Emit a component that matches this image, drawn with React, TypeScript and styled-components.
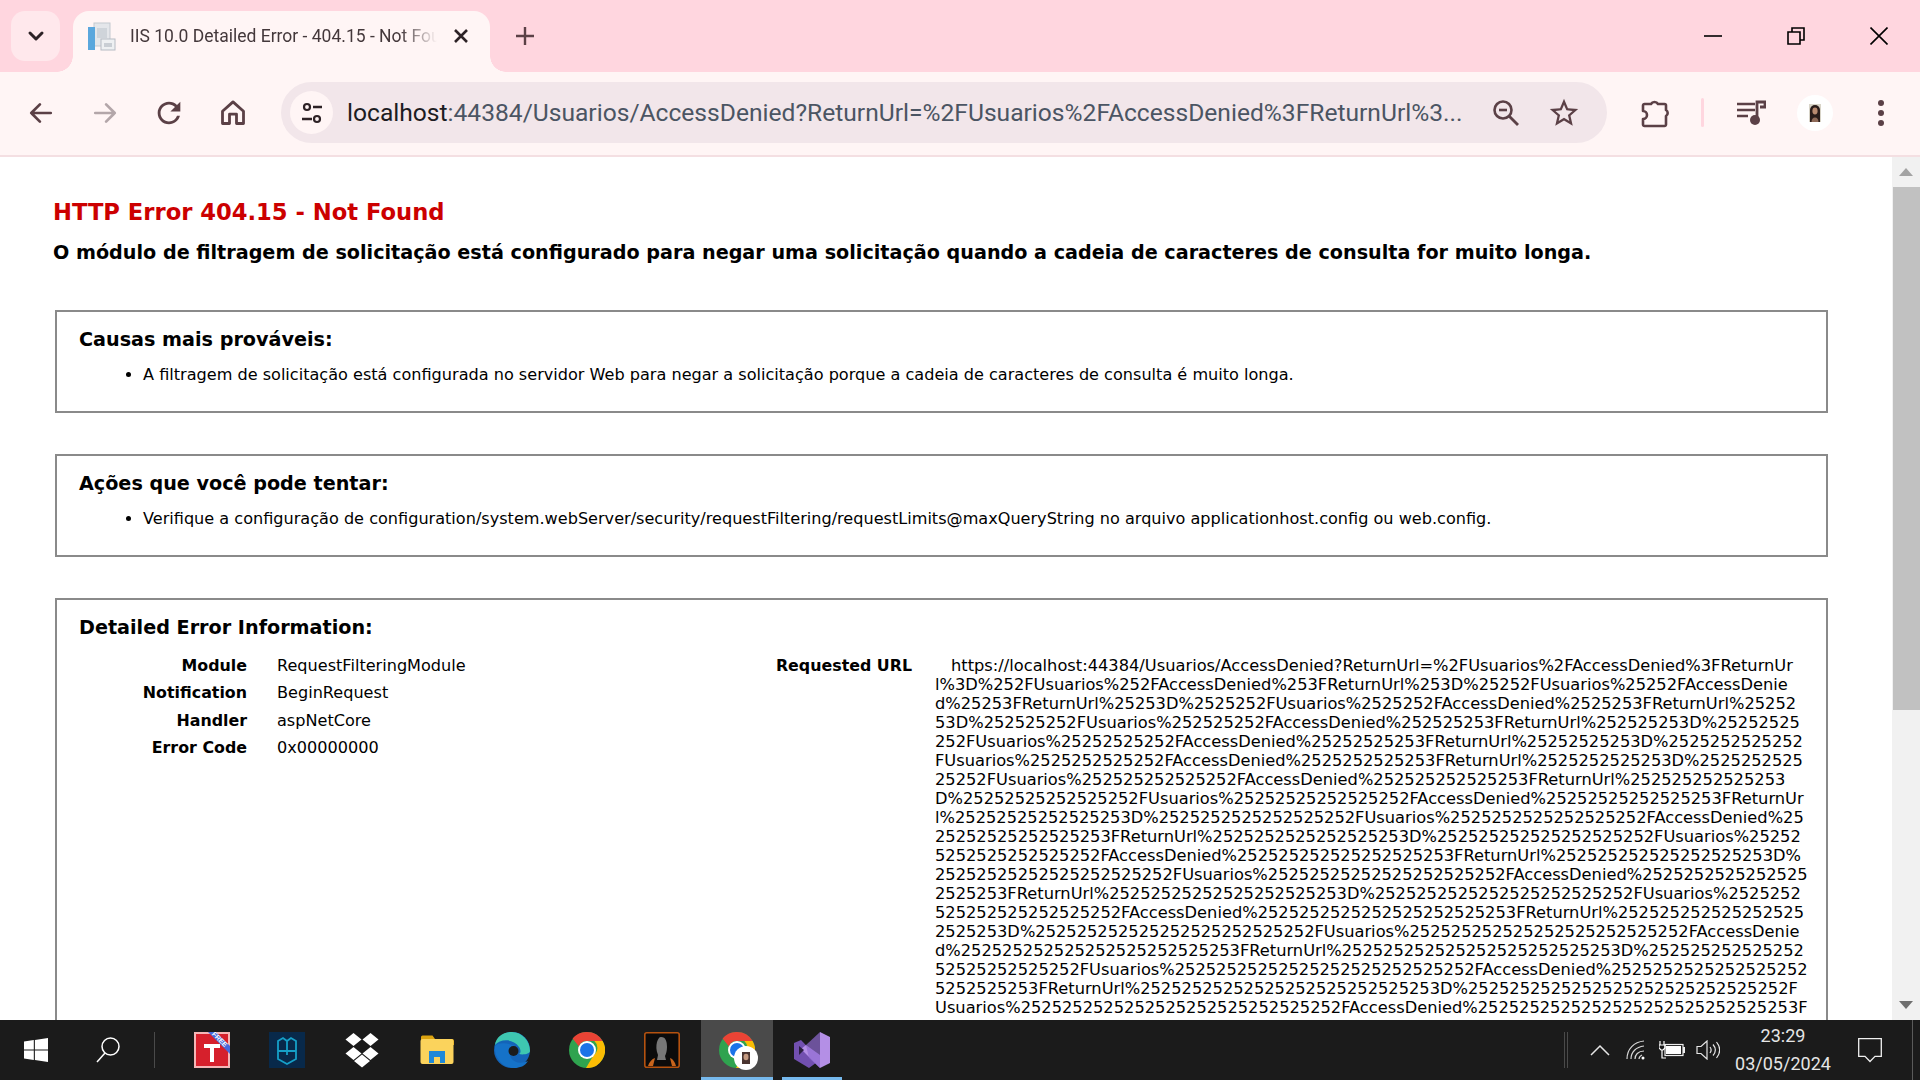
import React from "react";
import styled, { createGlobalStyle } from "styled-components";

const GlobalStyle = createGlobalStyle`
  html, body { margin: 0; padding: 0; height: 100%; overflow: hidden; background: #fff; }
  #root { height: 100%; }
`;

const uiFont = `Roboto, "Open Sans", "Liberation Sans", sans-serif`;
const pageFont = `"DejaVu Sans", Verdana, sans-serif`;
const ink = "#5b4046";

const Screen = styled.div`
  display: flex; flex-direction: column; width: 1920px; height: 1080px; overflow: hidden;
`;
const TitleBar = styled.div`
  display: flex; align-items: flex-start; height: 72px; flex: none; box-sizing: border-box;
  padding: 11px 0 0 11px; background: #ffd6df;
`;
const TabSearchButton = styled.div`
  display: flex; align-items: center; justify-content: center; width: 49px; height: 50px;
  border-radius: 14px; background: #ffe8ec; flex: none;
`;
const Tab = styled.div`
  position: relative; display: flex; align-items: center; width: 417px; height: 61px; margin-left: 13px;
  box-sizing: border-box; padding: 0 21px 11px 14px; background: #fff5f5; border-radius: 16px 16px 0 0; flex: none;
  &::before, &::after { content: ""; position: absolute; bottom: 0; width: 16px; height: 16px;
    background: radial-gradient(circle at var(--cx) 0, #ffd6df 15.5px, #fff5f5 16px); }
  &::before { left: -16px; --cx: 0; }
  &::after { right: -16px; --cx: 16px; }
`;
const Favicon = styled.svg`width: 29px; height: 29px; flex: none;`;
const TabTitle = styled.span`
  flex: 1; margin-left: 14px; overflow: hidden; white-space: nowrap; font: 400 17.5px ${uiFont}; color: #44383b;
  -webkit-mask-image: linear-gradient(to right, #000 88%, transparent 100%);
`;
const TabClose = styled.svg`width: 16px; height: 16px; flex: none; margin-left: 16px;`;
const NewTab = styled.svg`width: 22px; height: 22px; margin: 14px 0 0 24px; flex: none;`;
const WindowControls = styled.div`display: flex; margin-left: auto; height: 50px;`;
const WindowButton = styled.div`display: flex; align-items: center; justify-content: center; width: 83px; height: 50px;`;

const Toolbar = styled.div`
  display: flex; align-items: center; height: 85px; flex: none; box-sizing: border-box; padding: 0 5px 2px 9px;
  background: #fff5f5; border-bottom: 2px solid #f4dfe2;
`;
const IconSlot = styled.div`display: flex; align-items: center; justify-content: center; width: 64px; height: 61px; flex: none;`;
const MenuSlot = styled(IconSlot)`margin-left: 2px;`;
const AddressBar = styled.div`
  display: flex; align-items: center; width: 1326px; height: 61px; margin: 0 16px; box-sizing: border-box;
  padding: 0 14px 0 9px; border-radius: 31px; background: #f2e6ea; flex: none;
`;
const SiteInfo = styled.div`
  display: flex; align-items: center; justify-content: center; width: 43px; height: 43px; border-radius: 50%; background: #fff5f5; flex: none;
`;
const UrlText = styled.div`
  flex: 1; margin-left: 14px; white-space: nowrap; overflow: hidden; font: 400 24.6px ${uiFont}; color: #4b5563;
  b { font-weight: 400; color: #1c1c22; }
`;
const AddressIcon = styled.div`display: flex; align-items: center; justify-content: center; width: 58px; flex: none;`;
const ToolbarSeparator = styled.div`width: 3px; height: 29px; border-radius: 2px; background: #ffd6df; margin: 0 15px 0 14px; flex: none;`;
const ProfileCircle = styled.div`
  display: flex; align-items: center; justify-content: center; width: 36px; height: 36px; border-radius: 50%; background: #fff;
`;

const PageArea = styled.div`display: flex; flex: 1; min-height: 0; background: #fff;`;
const Content = styled.div`flex: 1; min-width: 0; overflow: hidden; box-sizing: border-box; padding: 41px 0 0 53px;
  font-family: ${pageFont}; color: #000;`;
const ErrorTitle = styled.h1`margin: 0; font: 700 22.65px/28px ${pageFont}; color: #cc0000;`;
const ErrorSubtitle = styled.h2`margin: 15px 0 0; font: 700 19.18px/24px ${pageFont}; color: #000; white-space: nowrap;`;
const Box = styled.section`
  width: 1773px; height: 103px; margin: 41px 0 0 2px; box-sizing: border-box; padding: 16px 22px 0;
  border: 2px solid #8a8a8a; flex: none;
  &:first-of-type { margin-top: 45px; }
`;
const TallBox = styled(Box)`height: 700px;`;
const BoxTitle = styled.h3`margin: 0; font: 700 19.18px/24px ${pageFont}; color: #000;`;
const Causes = styled.ul`margin: 13px 0 0; padding: 0 0 0 64px; font-size: 16.1px; line-height: 19px;`;
const InfoRow = styled.div`display: flex; margin-top: 16px; font-size: 16.1px; line-height: 19px;`;
const Summary = styled.div`display: grid; grid-template-columns: 168px auto; column-gap: 30px; row-gap: 8.4px; width: 620px; align-content: start; flex: none;`;
const Label = styled.div`font-weight: 700; font-size: 15.85px; text-align: right;`;
const Value = styled.div``;
const UrlLabel = styled(Label)`width: 213px; flex: none;`;
const UrlValue = styled.div`margin-left: 23px; white-space: nowrap; font-size: 16.25px;`;
const UrlLine = styled.div<{ $indent?: boolean }>`padding-left: ${(p) => (p.$indent ? "16px" : "0")};`;

const Scrollbar = styled.div`display: flex; flex-direction: column; width: 28px; flex: none; background: #f1f1f1;`;
const ScrollArrow = styled.div`display: flex; align-items: center; justify-content: center; height: 30px; flex: none;`;
const ScrollThumb = styled.div`height: 523px; margin-left: 1px; background: #c1c1c1; flex: none;`;
const ScrollTrack = styled.div`flex: 1;`;

const Taskbar = styled.div`display: flex; align-items: stretch; height: 60px; flex: none; background: #1b1b1b;`;
const TaskLead = styled.div`display: flex; align-items: center; justify-content: center; width: 72px; flex: none;`;
const TaskDivider = styled.div`width: 1px; height: 36px; align-self: center; background: #4a4a4a; margin-left: 10px; margin-right: 19px; flex: none;`;
const TaskSlot = styled.div<{ $active?: boolean; $running?: boolean }>`
  position: relative; display: flex; align-items: center; justify-content: center; width: 75px; flex: none;
  &::before { content: ""; position: absolute; top: 0; bottom: 0; left: 2px; right: 1px;
    background: ${(p) => (p.$active ? "#4a4a4a" : "transparent")}; }
  &::after { content: ""; position: absolute; bottom: 0; height: 3px; left: ${(p) => (p.$active ? "2px" : "8px")}; right: ${(p) => (p.$active ? "1px" : "7px")};
    background: ${(p) => (p.$active || p.$running ? "#76b9ed" : "transparent")}; }
  svg { position: relative; }
`;
const Tray = styled.div`display: flex; align-items: stretch; margin-left: auto;`;
const TrayDivider = styled.div`width: 4px; height: 36px; align-self: center; border-left: 1px solid #4a4a4a; border-right: 1px solid #4a4a4a; box-sizing: border-box; margin-right: 14px;`;
const TraySlot = styled.div`display: flex; align-items: center; justify-content: center; width: 36px; flex: none;`;
const Clock = styled.div`
  display: flex; flex-direction: column; align-items: center; justify-content: center; width: 114px; gap: 4px;
  font: 400 18px/24px ${uiFont}; color: #e6e6e6; flex: none;
`;
const NotifySlot = styled.div`display: flex; align-items: center; justify-content: center; width: 60px; flex: none;`;
const ShowDesktop = styled.div`width: 7px; margin-left: 12px; border-left: 1px solid #5a5a5a; flex: none;`;

const p = (n: number) => "%" + "25".repeat(n);
const r = (n: number) => "25".repeat(n);
const urlLines = [
  `https://localhost:44384/Usuarios/AccessDenied?ReturnUrl=${p(0)}2FUsuarios${p(0)}2FAccessDenied${p(0)}3FReturnUr`,
  `l${p(0)}3D${p(1)}2FUsuarios${p(1)}2FAccessDenied${p(1)}3FReturnUrl${p(1)}3D${p(2)}2FUsuarios${p(2)}2FAccessDenie`,
  `d${p(2)}3FReturnUrl${p(2)}3D${p(3)}2FUsuarios${p(3)}2FAccessDenied${p(3)}3FReturnUrl%25252`,
  `53D${p(4)}2FUsuarios${p(4)}2FAccessDenied${p(4)}3FReturnUrl${p(4)}3D${p(4)}`,
  `252FUsuarios${p(5)}2FAccessDenied${p(5)}3FReturnUrl${p(5)}3D${p(6)}2`,
  `FUsuarios${p(6)}2FAccessDenied${p(6)}3FReturnUrl${p(6)}3D${p(5)}`,
  `25252FUsuarios${p(7)}2FAccessDenied${p(7)}3FReturnUrl${p(7)}3`,
  `D${p(8)}2FUsuarios${p(8)}2FAccessDenied${p(8)}3FReturnUr`,
  `l${p(8)}3D${p(9)}2FUsuarios${p(9)}2FAccessDenied%25`,
  `${r(8)}3FReturnUrl${p(9)}3D${p(10)}2FUsuarios%25252`,
  `5${r(7)}2FAccessDenied${p(10)}3FReturnUrl${p(10)}3D%`,
  `${r(11)}2FUsuarios${p(11)}2FAccessDenied${p(8)}`,
  `2525253FReturnUrl${p(11)}3D${p(12)}2FUsuarios%2525252`,
  `5${r(8)}2FAccessDenied${p(12)}3FReturnUrl${p(9)}`,
  `2525253D${p(13)}2FUsuarios${p(13)}2FAccessDenie`,
  `d${p(13)}3FReturnUrl${p(13)}3D%252525252525252`,
  `5${r(6)}2FUsuarios${p(14)}2FAccessDenied%2525252525252525252`,
  `5252525253FReturnUrl${p(14)}3D${p(15)}2F`,
  `Usuarios${p(15)}2FAccessDenied${p(15)}3F`,
  `ReturnUrl${p(15)}3D${p(16)}`,
];

const ChromeLogo = ({ size = 36 }: { size?: number }) => (
  <svg width={size} height={size} viewBox="0 0 36 36">
    <circle cx="18" cy="18" r="18" fill="#2fa34f" />
    <path d="M18 0a18 18 0 0 1 15.6 9H18a9 9 0 0 0-8.2 5.3L3.6 6.6A18 18 0 0 1 18 0z" fill="#ea4335" />
    <path d="M33.6 9A18 18 0 0 1 17 36l7.7-13a9 9 0 0 0 .6-14z" fill="#fbbc04" />
    <circle cx="18" cy="18" r="9" fill="#fff" />
    <circle cx="18" cy="18" r="7" fill="#1a73e8" />
  </svg>
);

const Line = ({ d, w = 2.4, c = ink }: { d: string; w?: number; c?: string }) => (
  <path d={d} fill="none" stroke={c} strokeWidth={w} strokeLinecap="round" strokeLinejoin="round" />
);

export default function App() {
  return (
    <Screen>
      <GlobalStyle />
      <TitleBar>
        <TabSearchButton>
          <svg width="18" height="12" viewBox="0 0 18 12"><path d="M3 3l6 6 6-6" fill="none" stroke="#2d2226" strokeWidth="3" strokeLinecap="round" strokeLinejoin="round" /></svg>
        </TabSearchButton>
        <Tab>
          <Favicon viewBox="0 0 29 29">
            <rect x="7" y="1" width="16" height="23" fill="#e4e6ea" stroke="#c4c9d0" />
            <rect x="1" y="5" width="7" height="23" fill="#5aa7dd" />
            <rect x="10" y="6" width="10" height="10" fill="#cfd4da" />
            <rect x="14" y="17" width="14" height="11" fill="#eef0f2" stroke="#b6bcc4" />
            <rect x="17" y="21" width="8" height="4" fill="#c9ced4" />
          </Favicon>
          <TabTitle>IIS 10.0 Detailed Error - 404.15 - Not Found</TabTitle>
          <TabClose viewBox="0 0 16 16"><path d="M2 2l12 12M14 2L2 14" stroke="#2d2226" strokeWidth="2.6" fill="none" /></TabClose>
        </Tab>
        <NewTab viewBox="0 0 22 22"><path d="M11 2v18M2 11h18" stroke={ink} strokeWidth="2.4" fill="none" /></NewTab>
        <WindowControls>
          <WindowButton>
            <svg width="18" height="18" viewBox="0 0 18 18"><path d="M0 9h18" stroke="#000" strokeWidth="1.6" /></svg>
          </WindowButton>
          <WindowButton>
            <svg width="18" height="18" viewBox="0 0 18 18"><path d="M1 5h12v12H1zM5 5V1h12v12h-4" fill="none" stroke="#000" strokeWidth="1.6" /></svg>
          </WindowButton>
          <WindowButton>
            <svg width="18" height="18" viewBox="0 0 18 18"><path d="M0.5 0.5l17 17M17.5 0.5l-17 17" stroke="#000" strokeWidth="1.6" fill="none" /></svg>
          </WindowButton>
        </WindowControls>
      </TitleBar>

      <Toolbar>
        <IconSlot>
          <svg width="26" height="26" viewBox="0 0 24 24"><Line d="M21 12H3M11 4l-8 8 8 8" w={2.5} /></svg>
        </IconSlot>
        <IconSlot>
          <svg width="26" height="26" viewBox="0 0 24 24"><Line d="M3 12h18M13 4l8 8-8 8" w={2.5} c="#b3a6a9" /></svg>
        </IconSlot>
        <IconSlot>
          <svg width="34" height="34" viewBox="0 0 24 24"><path fill={ink} d="M17.65 6.35A7.958 7.958 0 0 0 12 4c-4.42 0-7.99 3.58-7.99 8s3.57 8 7.99 8c3.73 0 6.84-2.55 7.73-6h-2.08A5.99 5.99 0 0 1 12 18c-3.31 0-6-2.69-6-6s2.69-6 6-6c1.66 0 3.14.69 4.22 1.78L13 11h7V4l-2.35 2.35z" /></svg>
        </IconSlot>
        <IconSlot>
          <svg width="28" height="28" viewBox="0 0 24 24"><path d="M3 10.5L12 2.5l9 8V21h-6v-8H9v8H3z" fill="none" stroke={ink} strokeWidth="2.4" strokeLinejoin="round" /></svg>
        </IconSlot>
        <AddressBar>
          <SiteInfo>
            <svg width="24" height="24" viewBox="0 0 24 24">
              <circle cx="7" cy="6" r="3" fill="none" stroke="#2d2226" strokeWidth="2.2" />
              <circle cx="17" cy="18" r="3" fill="none" stroke="#2d2226" strokeWidth="2.2" />
              <path d="M13 6h9M2 18h10" stroke="#2d2226" strokeWidth="2.4" fill="none" />
            </svg>
          </SiteInfo>
          <UrlText><b>localhost</b>:44384/Usuarios/AccessDenied?ReturnUrl=%2FUsuarios%2FAccessDenied%3FReturnUrl%3...</UrlText>
          <AddressIcon>
            <svg width="28" height="28" viewBox="0 0 28 28">
              <circle cx="11" cy="11" r="8.5" fill="none" stroke={ink} strokeWidth="2.6" />
              <path d="M17 17l9 9" stroke={ink} strokeWidth="2.8" fill="none" />
              <path d="M7 11h8" stroke={ink} strokeWidth="2.6" fill="none" />
            </svg>
          </AddressIcon>
          <AddressIcon>
            <svg width="34" height="34" viewBox="0 0 24 24"><path fill={ink} d="M22 9.24l-7.19-.62L12 2 9.19 8.63 2 9.24l5.46 4.73L5.82 21 12 17.27 18.18 21l-1.63-7.03L22 9.24zM12 15.4l-3.76 2.27 1-4.28-3.32-2.88 4.38-.38L12 6.1l1.71 4.04 4.38.38-3.32 2.88 1 4.28L12 15.4z" /></svg>
          </AddressIcon>
        </AddressBar>
        <IconSlot>
          <svg width="30" height="30" viewBox="0 0 30 30">
            <path d="M3 7.5a1.5 1.5 0 0 1 1.5-1.5H11a4 4 0 0 1 7 0h6.5A1.5 1.5 0 0 1 26 7.500V12a3.500 3.500 0 0 1 0 6v8.500a1.500 1.500 0 0 1-1.500 1.500H4.500A1.500 1.500 0 0 1 3 26.500V21a4 4 0 0 0 0-8z" fill="none" stroke={ink} strokeWidth="2.6" strokeLinejoin="round" />
          </svg>
        </IconSlot>
        <ToolbarSeparator />
        <IconSlot>
          <svg width="30" height="26" viewBox="0 0 30 26">
            <path d="M1 4h18M1 10h18M1 16h11" stroke={ink} strokeWidth="2.6" fill="none" />
            <path d="M21 20V2h8v5h-5" fill="none" stroke={ink} strokeWidth="2.8" />
            <circle cx="19" cy="20" r="5" fill={ink} />
          </svg>
        </IconSlot>
        <IconSlot>
          <ProfileCircle>
            <svg width="12" height="18" viewBox="0 0 12 18">
              <rect width="12" height="18" fill="#d8d4c8" />
              <path d="M1 18V6a5 5 0 0 1 10 0v12z" fill="#2a1c1a" />
              <ellipse cx="6" cy="7" rx="2.600" ry="3.400" fill="#b98a70" />
              <path d="M2.500 18c0-3 1.500-4.500 3.500-4.500S9.500 15 9.500 18z" fill="#8f6a58" />
            </svg>
          </ProfileCircle>
        </IconSlot>
        <MenuSlot>
          <svg width="8" height="28" viewBox="0 0 8 28">
            <circle cx="4" cy="4" r="3" fill={ink} /><circle cx="4" cy="14" r="3" fill={ink} /><circle cx="4" cy="24" r="3" fill={ink} />
          </svg>
        </MenuSlot>
      </Toolbar>

      <PageArea>
        <Content>
          <ErrorTitle>HTTP Error 404.15 - Not Found</ErrorTitle>
          <ErrorSubtitle>O módulo de filtragem de solicitação está configurado para negar uma solicitação quando a cadeia de caracteres de consulta for muito longa.</ErrorSubtitle>
          <Box>
            <BoxTitle>Causas mais prováveis:</BoxTitle>
            <Causes>
              <li>A filtragem de solicitação está configurada no servidor Web para negar a solicitação porque a cadeia de caracteres de consulta é muito longa.</li>
            </Causes>
          </Box>
          <Box>
            <BoxTitle>Ações que você pode tentar:</BoxTitle>
            <Causes>
              <li>Verifique a configuração de configuration/system.webServer/security/requestFiltering/requestLimits@maxQueryString no arquivo applicationhost.config ou web.config.</li>
            </Causes>
          </Box>
          <TallBox>
            <BoxTitle>Detailed Error Information:</BoxTitle>
            <InfoRow>
              <Summary>
                <Label>Module</Label><Value>RequestFilteringModule</Value>
                <Label>Notification</Label><Value>BeginRequest</Value>
                <Label>Handler</Label><Value>aspNetCore</Value>
                <Label>Error Code</Label><Value>0x00000000</Value>
              </Summary>
              <UrlLabel>Requested URL</UrlLabel>
              <UrlValue>
                {urlLines.map((line, i) => (
                  <UrlLine key={i} $indent={i === 0}>{line}</UrlLine>
                ))}
              </UrlValue>
            </InfoRow>
          </TallBox>
        </Content>
        <Scrollbar>
          <ScrollArrow>
            <svg width="14" height="8" viewBox="0 0 14 8"><path d="M7 0l7 8H0z" fill="#a3a3a3" /></svg>
          </ScrollArrow>
          <ScrollThumb />
          <ScrollTrack />
          <ScrollArrow>
            <svg width="14" height="8" viewBox="0 0 14 8"><path d="M0 0h14L7 8z" fill="#6f6f6f" /></svg>
          </ScrollArrow>
        </Scrollbar>
      </PageArea>

      <Taskbar>
        <TaskLead>
          <svg width="24" height="24" viewBox="0 0 24 24"><path fill="#fff" d="M0 3.400l9.800-1.300v9.400H0zM10.900 1.900L24 0v11.500H10.900zM0 12.500h9.800v9.400L0 20.600zM10.900 12.500H24V24l-13.100-1.900z" /></svg>
        </TaskLead>
        <TaskLead>
          <svg width="24" height="26" viewBox="0 0 24 26"><circle cx="14.500" cy="9.500" r="8.500" fill="none" stroke="#fff" strokeWidth="1.500" /><path d="M9 16L1 25" stroke="#fff" strokeWidth="1.500" /></svg>
        </TaskLead>
        <TaskDivider />
        <TaskSlot>
          <svg width="36" height="36" viewBox="0 0 36 36">
            <rect width="36" height="36" fill="#f4b6b6" />
            <rect x="2" y="2" width="32" height="32" fill="#d6202c" />
            <path d="M10 12h16v4h-6v14h-4V16h-6z" fill="#fff" />
            <path d="M14 0h8l14 14v8z" fill="#4668dc" />
            <text x="24" y="9" fontSize="7" fontWeight="700" fill="#fff" fontFamily="Liberation Sans" transform="rotate(45 24 9)" textAnchor="middle">FREE</text>
          </svg>
        </TaskSlot>
        <TaskSlot>
          <svg width="36" height="36" viewBox="0 0 36 36">
            <rect width="36" height="36" fill="#08294a" />
            <path d="M9 9l5-3 4 3 4-3 5 3v18l-9 5-9-5z M18 9v14 M9 19h18" fill="none" stroke="#16a0c8" strokeWidth="1.800" />
          </svg>
        </TaskSlot>
        <TaskSlot>
          <svg width="36" height="36" viewBox="0 0 36 36">
            <path fill="#fff" d="M9.500 1l8 6.500-8 6.500-8-6.500zM26.500 1l8 6.500-8 6.500-8-6.500zM9.500 15l8 6.500-8 6.500-8-6.500zM26.500 15l8 6.500-8 6.500-8-6.500zM18 22.500l8 6.500-8 6.500-8-6.500z" />
          </svg>
        </TaskSlot>
        <TaskSlot>
          <svg width="34" height="30" viewBox="0 0 34 30">
            <path d="M1 2a1.500 1.500 0 0 1 1.500-1.500h10L15 4h17a2 2 0 0 1 2 2v4H1z" fill="#dca410" />
            <rect x="0.500" y="4" width="33" height="25" rx="2" fill="#fbd35c" />
            <path d="M9 28V16h16v12h-5v-6h-6v6z" fill="#1e88d8" />
          </svg>
        </TaskSlot>
        <TaskSlot>
          <svg width="36" height="36" viewBox="0 0 36 36">
            <circle cx="18" cy="18" r="18" fill="#1464b8" />
            <path d="M36 19c0-10-8-19-18-19C9 0 2 5 1 13c5-6 18-7 24 2 2 3 2 6 0 7 4 1 11 0 11-3z" fill="#3ec7b0" />
            <path d="M1 14C0 26 9 36 20 36c6 0 11-2 14-7-6 3-14 2-17-3-3-5 0-10 4-12-7-3-16-4-20 0z" fill="#1572c8" />
            <circle cx="19.500" cy="19" r="5" fill="#1b1b1b" />
          </svg>
        </TaskSlot>
        <TaskSlot><ChromeLogo /></TaskSlot>
        <TaskSlot>
          <svg width="36" height="36" viewBox="0 0 36 36">
            <rect x="0.800" y="0.800" width="34.400" height="34.400" rx="2" fill="#0b0b0b" stroke="#b5520f" strokeWidth="1.600" />
            <path d="M17 5c5 0 6 5 6 10 0 4-1 7-2 9l1 4h-9l1-5c-2-5-2-9-1-13 1-3 2-5 4-5z" fill="#777" />
            <path d="M4 34c1-4 4-7 7-8l-2 8zM32 34c-1-4-3-7-6-8l2 8z" fill="#c8641c" />
          </svg>
        </TaskSlot>
        <TaskSlot $active>
          <svg width="44" height="42" viewBox="0 0 44 42">
            <g transform="translate(4 3)"><ChromeLogo size={36} /></g>
            <circle cx="31" cy="29" r="12" fill="#fff" />
            <rect x="27" y="23" width="8" height="12" fill="#4a3430" />
            <ellipse cx="31" cy="28" rx="2.500" ry="3.200" fill="#c59a80" />
          </svg>
        </TaskSlot>
        <TaskSlot $running>
          <svg width="36" height="36" viewBox="0 0 36 36">
            <path d="M0 11l7-3 19 20-11 8L0 27z" fill="#7250b0" />
            <path d="M26 0l10 5v26l-10 5L7 17l5-4 14 10z" fill="#b48fe6" />
            <path d="M26 0v36L15 26l-3-13z" fill="#8e6ad0" opacity="0.700" />
            <path d="M5 14l5 4-5 5z" fill="#2b2040" />
          </svg>
        </TaskSlot>
        <Tray>
          <TrayDivider />
          <TraySlot>
            <svg width="20" height="12" viewBox="0 0 20 12"><path d="M1 11l9-9 9 9" fill="none" stroke="#e6e6e6" strokeWidth="1.500" /></svg>
          </TraySlot>
          <TraySlot>
            <svg width="20" height="20" viewBox="0 0 20 20">
              <g fill="none" stroke="#d8d8d8" strokeWidth="1.200"><path d="M1 19C1 9 8 2 18 1" /><path d="M5 19c0-7 5-12 13-13" /><path d="M9 19c0-4 3-8 9-8" /><path d="M13 19c0-2 1-3 3-4" /></g>
              <circle cx="17" cy="18" r="1.500" fill="#fff" />
            </svg>
          </TraySlot>
          <TraySlot>
            <svg width="26" height="18" viewBox="0 0 26 18">
              <rect x="6" y="3.500" width="18" height="11" fill="none" stroke="#eee" strokeWidth="1.200" />
              <rect x="7" y="5" width="15" height="8" fill="#fff" />
              <rect x="24" y="6" width="2" height="6" fill="#eee" />
              <path d="M1 0v4M5 0v4M0 4h6v3l-2 2H2L0 7zM3 9v8h4" fill="none" stroke="#fff" strokeWidth="1.200" />
            </svg>
          </TraySlot>
          <TraySlot>
            <svg width="24" height="20" viewBox="0 0 24 20">
              <path d="M1 6.500h4L11 1v18l-6-5.500H1z" fill="none" stroke="#e6e6e6" strokeWidth="1.200" />
              <path d="M14 7c1.500 2 1.500 4 0 6M17 4.500c3 3.500 3 7.500 0 11M20.500 2c4 5 4 11 0 16" fill="none" stroke="#e6e6e6" strokeWidth="1.200" />
            </svg>
          </TraySlot>
          <Clock>
            <span>23:29</span>
            <span>03/05/2024</span>
          </Clock>
          <NotifySlot>
            <svg width="24" height="25" viewBox="0 0 24 25"><path d="M0.700 0.700h22.600v17.600h-6.300L12 23.500l-5-5.200H0.700z" fill="none" stroke="#f0f0f0" strokeWidth="1.300" /></svg>
          </NotifySlot>
          <ShowDesktop />
        </Tray>
      </Taskbar>
    </Screen>
  );
}
